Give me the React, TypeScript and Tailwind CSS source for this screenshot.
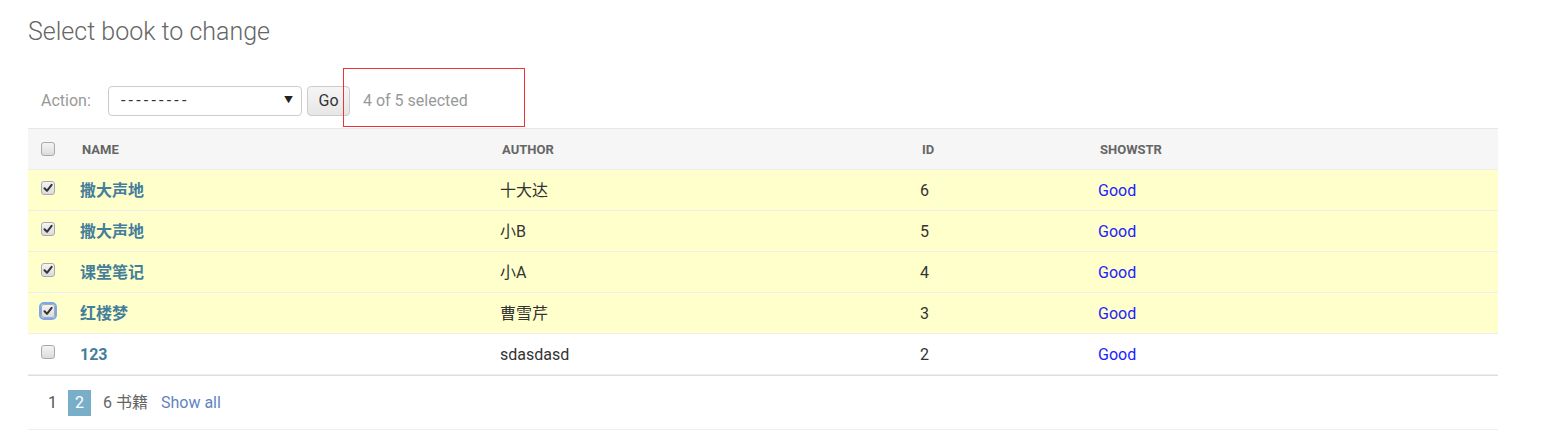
import React from "react";

const font = { fontFamily: 'Roboto, "Noto Sans CJK SC", "Liberation Sans", sans-serif' };

function Check({ checked, focus }: { checked?: boolean; focus?: boolean }) {
  return (
    <span
      className={`relative inline-flex h-[14px] w-[14px] items-center justify-center rounded-[3px] border border-[#a9a9a9] bg-gradient-to-b from-[#f4f4f4] to-[#dcdcdc] ${
        focus ? "outline outline-2 outline-[#7aa7f0] outline-offset-0" : ""
      }`}
    >
      {checked && (
        <svg width="10" height="10" viewBox="0 0 10 10">
          <path d="M1.5 5.2 L4 7.8 L8.6 1.8" fill="none" stroke="#333" strokeWidth="2" strokeLinecap="round" strokeLinejoin="round" />
        </svg>
      )}
    </span>
  );
}

const rows = [
  { name: "撒大声地", author: "十大达", id: "6", sel: true },
  { name: "撒大声地", author: "小B", id: "5", sel: true },
  { name: "课堂笔记", author: "小A", id: "4", sel: true },
  { name: "红楼梦", author: "曹雪芹", id: "3", sel: true, focus: true },
  { name: "123", author: "sdasdasd", id: "2", sel: false },
];

const cols = "grid grid-cols-[42px_420px_420px_178px_410px]";

export default function App() {
  return (
    <div className="min-h-[437px] w-[1545px] bg-white pl-[28px]" style={font}>
      <h1 className="pt-[17px] text-[25px] font-light leading-[30px] text-[#666]">Select book to change</h1>

      <div className="relative mt-[39px] flex h-[30px] items-center">
        <span className="ml-[13px] w-[50px] text-[16px] text-[#999]">Action:</span>
        <div className="ml-[17px] flex h-[30px] w-[194px] items-center justify-between rounded-[4px] border border-[#ccc] bg-white pl-[12px] pr-[8px] text-[16px] text-[#333]">
          <span className="tracking-[3.2px]">---------</span>
          <span className="text-[9px] text-[#222]">▼</span>
        </div>
        <div className="ml-[5px] flex h-[30px] w-[43px] items-center justify-center rounded-[4px] border border-[#ccc] bg-gradient-to-b from-[#f6f6f6] to-[#e6e6e6] text-[16px] text-[#333]">
          Go
        </div>
        <span className="ml-[13px] text-[16px] text-[#999]">4 of 5 selected</span>
        <div className="absolute left-[315px] top-[-18px] h-[59px] w-[182px] border border-[#ee3333]" />
      </div>

      <div className="mt-[12px] w-[1470px]">
        <div className={`${cols} h-[41px] items-center border-t border-[#e8e8e8] bg-[#f6f6f6] text-[13px] font-bold text-[#666]`}>
          <div className="flex justify-center pr-[2px]">
            <Check />
          </div>
          <div className="pl-[12px] pt-[1px]">NAME</div>
          <div className="pl-[12px] pt-[1px]">AUTHOR</div>
          <div className="pl-[12px] pt-[1px]">ID</div>
          <div className="pl-[12px] pt-[1px]">SHOWSTR</div>
        </div>
        {rows.map((r, i) => (
          <div
            key={i}
            className={`${cols} h-[41px] items-center border-t border-[#eee] text-[16px] ${r.sel ? "bg-[#ffffcc]" : "bg-white"}`}
          >
            <div className="flex justify-center pr-[2px] pb-[4px]">
              <Check checked={r.sel} focus={r.focus} />
            </div>
            <div className="pl-[10px] pt-[2px] font-bold text-[#447e9b]">{r.name}</div>
            <div className="pl-[10px] pt-[2px] text-[#333]">{r.author}</div>
            <div className="pl-[10px] pt-[2px] text-[#333]">{r.id}</div>
            <div className="pl-[10px] pt-[2px] text-[#2222ff]">Good</div>
          </div>
        ))}
        <div className="border-t border-[#eee]" />
        <div className="flex h-[55px] items-center border-t border-[#ddd] border-b border-b-[#eee] pt-[1px] text-[16px]">
          <span className="ml-[20px] text-[#555]">1</span>
          <span className="ml-[11px] flex h-[26px] w-[23px] items-center justify-center bg-[#79aec8] text-white">2</span>
          <span className="ml-[12px] text-[#666]">6 书籍</span>
          <span className="ml-[13px] text-[#5f84c2]">Show all</span>
        </div>
      </div>
    </div>
  );
}
